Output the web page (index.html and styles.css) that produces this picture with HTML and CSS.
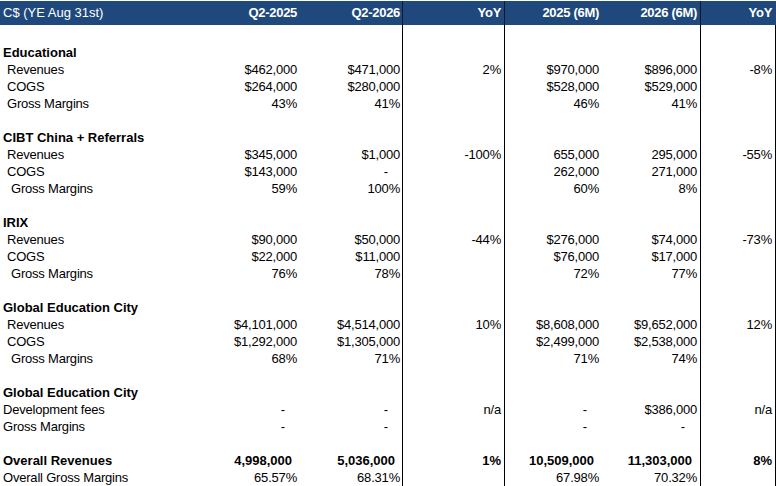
FILE: index.html
```html
<!DOCTYPE html>
<html>
<head>
<meta charset="utf-8">
<title>Segment results</title>
<link rel="stylesheet" href="styles.css">
</head>
<body>
<div class="sheet">
  <div class="row head">
    <div class="c a plain">C$ (YE Aug 31st)</div>
    <div class="c b">Q2-2025</div>
    <div class="c cc">Q2-2026</div>
    <div class="c d">YoY</div>
    <div class="c e">2025 (6M)</div>
    <div class="c f">2026 (6M)</div>
    <div class="c g">YoY</div>
  </div>
  <div class="row sp"><div class="c a"></div><div class="c b"></div><div class="c cc"></div><div class="c d"></div><div class="c e"></div><div class="c f"></div><div class="c g"></div></div>

  <div class="row"><div class="c a title">Educational</div><div class="c b"></div><div class="c cc"></div><div class="c d"></div><div class="c e"></div><div class="c f"></div><div class="c g"></div></div>
  <div class="row"><div class="c a i1">Revenues</div><div class="c b">$462,000</div><div class="c cc">$471,000</div><div class="c d">2%</div><div class="c e">$970,000</div><div class="c f">$896,000</div><div class="c g">-8%</div></div>
  <div class="row"><div class="c a i1">COGS</div><div class="c b">$264,000</div><div class="c cc">$280,000</div><div class="c d"></div><div class="c e">$528,000</div><div class="c f">$529,000</div><div class="c g"></div></div>
  <div class="row"><div class="c a i1">Gross Margins</div><div class="c b">43%</div><div class="c cc">41%</div><div class="c d"></div><div class="c e">46%</div><div class="c f">41%</div><div class="c g"></div></div>
  <div class="row"><div class="c a"></div><div class="c b"></div><div class="c cc"></div><div class="c d"></div><div class="c e"></div><div class="c f"></div><div class="c g"></div></div>

  <div class="row"><div class="c a title">CIBT China + Referrals</div><div class="c b"></div><div class="c cc"></div><div class="c d"></div><div class="c e"></div><div class="c f"></div><div class="c g"></div></div>
  <div class="row"><div class="c a i1">Revenues</div><div class="c b">$345,000</div><div class="c cc">$1,000</div><div class="c d">-100%</div><div class="c e">655,000</div><div class="c f">295,000</div><div class="c g">-55%</div></div>
  <div class="row"><div class="c a i1">COGS</div><div class="c b">$143,000</div><div class="c cc dash">-</div><div class="c d"></div><div class="c e">262,000</div><div class="c f">271,000</div><div class="c g"></div></div>
  <div class="row"><div class="c a i2">Gross Margins</div><div class="c b">59%</div><div class="c cc">100%</div><div class="c d"></div><div class="c e">60%</div><div class="c f">8%</div><div class="c g"></div></div>
  <div class="row"><div class="c a"></div><div class="c b"></div><div class="c cc"></div><div class="c d"></div><div class="c e"></div><div class="c f"></div><div class="c g"></div></div>

  <div class="row"><div class="c a title">IRIX</div><div class="c b"></div><div class="c cc"></div><div class="c d"></div><div class="c e"></div><div class="c f"></div><div class="c g"></div></div>
  <div class="row"><div class="c a i1">Revenues</div><div class="c b">$90,000</div><div class="c cc">$50,000</div><div class="c d">-44%</div><div class="c e">$276,000</div><div class="c f">$74,000</div><div class="c g">-73%</div></div>
  <div class="row"><div class="c a i1">COGS</div><div class="c b">$22,000</div><div class="c cc">$11,000</div><div class="c d"></div><div class="c e">$76,000</div><div class="c f">$17,000</div><div class="c g"></div></div>
  <div class="row"><div class="c a i2">Gross Margins</div><div class="c b">76%</div><div class="c cc">78%</div><div class="c d"></div><div class="c e">72%</div><div class="c f">77%</div><div class="c g"></div></div>
  <div class="row"><div class="c a"></div><div class="c b"></div><div class="c cc"></div><div class="c d"></div><div class="c e"></div><div class="c f"></div><div class="c g"></div></div>

  <div class="row"><div class="c a title">Global Education City</div><div class="c b"></div><div class="c cc"></div><div class="c d"></div><div class="c e"></div><div class="c f"></div><div class="c g"></div></div>
  <div class="row"><div class="c a i1">Revenues</div><div class="c b">$4,101,000</div><div class="c cc">$4,514,000</div><div class="c d">10%</div><div class="c e">$8,608,000</div><div class="c f">$9,652,000</div><div class="c g">12%</div></div>
  <div class="row"><div class="c a i1">COGS</div><div class="c b">$1,292,000</div><div class="c cc">$1,305,000</div><div class="c d"></div><div class="c e">$2,499,000</div><div class="c f">$2,538,000</div><div class="c g"></div></div>
  <div class="row"><div class="c a i2">Gross Margins</div><div class="c b">68%</div><div class="c cc">71%</div><div class="c d"></div><div class="c e">71%</div><div class="c f">74%</div><div class="c g"></div></div>
  <div class="row"><div class="c a"></div><div class="c b"></div><div class="c cc"></div><div class="c d"></div><div class="c e"></div><div class="c f"></div><div class="c g"></div></div>

  <div class="row"><div class="c a title">Global Education City</div><div class="c b"></div><div class="c cc"></div><div class="c d"></div><div class="c e"></div><div class="c f"></div><div class="c g"></div></div>
  <div class="row"><div class="c a">Development fees</div><div class="c b dash">-</div><div class="c cc dash">-</div><div class="c d">n/a</div><div class="c e dash">-</div><div class="c f">$386,000</div><div class="c g">n/a</div></div>
  <div class="row"><div class="c a">Gross Margins</div><div class="c b dash">-</div><div class="c cc dash">-</div><div class="c d"></div><div class="c e dash">-</div><div class="c f dash">-</div><div class="c g"></div></div>
  <div class="row"><div class="c a"></div><div class="c b"></div><div class="c cc"></div><div class="c d"></div><div class="c e"></div><div class="c f"></div><div class="c g"></div></div>

  <div class="row total"><div class="c a">Overall Revenues</div><div class="c b big">4,998,000</div><div class="c cc big">5,036,000</div><div class="c d">1%</div><div class="c e big">10,509,000</div><div class="c f big">11,303,000</div><div class="c g">8%</div></div>
  <div class="row"><div class="c a">Overall Gross Margins</div><div class="c b">65.57%</div><div class="c cc">68.31%</div><div class="c d"></div><div class="c e">67.98%</div><div class="c f">70.32%</div><div class="c g"></div></div>
</div>
</body>
</html>
```

FILE: styles.css
```css
* {
  box-sizing: border-box;
}

html,
body {
  margin: 0;
  padding: 0;
  background: #ffffff;
}

body {
  padding-top: 1px;
  font-family: "Liberation Sans", Arial, sans-serif;
  font-size: 13px;
  color: #000000;
  overflow: hidden;
}

.sheet {
  width: 776px;
}

.row {
  display: grid;
  grid-template-columns: 200px 100px 103px 102px 97px 99px 75px;
  height: 17px;
  line-height: 17px;
}

.c {
  text-align: right;
  padding-right: 3px;
  white-space: nowrap;
  letter-spacing: -0.2px;
}

.c.a {
  text-align: left;
  padding-left: 3px;
  padding-right: 0;
}

.c.cc {
  padding-right: 2px;
  border-right: 1px solid #000000;
}

.c.d,
.c.f {
  border-right: 1px solid #000000;
}

.c.g {
  padding-right: 3px;
  border-right: 1px solid #000000;
}

.c.a.i1 {
  padding-left: 7px;
}

.c.a.i2 {
  padding-left: 11px;
}

.c.a.title {
  font-weight: bold;
  letter-spacing: 0;
}

.c.dash {
  padding-right: 15px;
}

.c.cc.dash {
  padding-right: 14px;
}

/* header */
.row.head {
  height: 24px;
  line-height: 24px;
  background: #1f497d;
  color: #ffffff;
}

.row.head .c {
  font-weight: bold;
  letter-spacing: -0.3px;
  border-right-color: #0c1a2c;
}

.row.head .c.a.plain {
  font-weight: normal;
  letter-spacing: 0;
}

.row.head .c.g {
  border-right: none;
  padding-right: 4px;
}

.row.sp {
  height: 19px;
}

/* totals */
.row.total .c {
  font-weight: bold;
  letter-spacing: 0;
}

.row.total .c.big {
  padding-right: 8px;
}

.row.total .c.cc.big {
  padding-right: 7px;
}
```
